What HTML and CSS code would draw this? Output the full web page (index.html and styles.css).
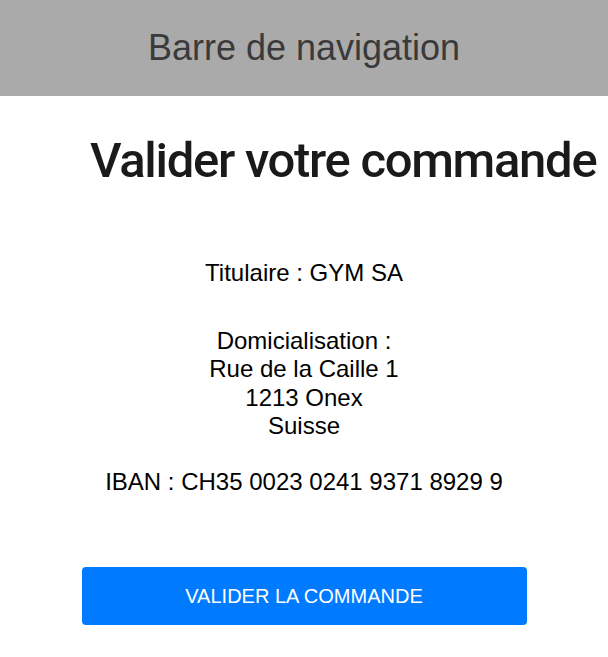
FILE: index.html
```html
<!DOCTYPE html>
<html lang="fr">
<head>
<meta charset="utf-8">
<title>Valider votre commande</title>
<link rel="stylesheet" href="styles.css">
</head>
<body>
<header class="navbar">Barre de navigation</header>
<main class="content">
  <h1 class="title">Valider votre commande</h1>
  <p class="info info-holder">Titulaire : GYM SA</p>
  <p class="info info-address">Domicialisation :<br>Rue de la Caille 1<br>1213 Onex<br>Suisse</p>
  <p class="info info-iban">IBAN : CH35 0023 0241 9371 8929 9</p>
  <button class="btn" type="button">VALIDER LA COMMANDE</button>
</main>
</body>
</html>
```
FILE: styles.css
```css
html, body {
  margin: 0;
  padding: 0;
  background: #fff;
}
body {
  font-family: "Liberation Sans", Arial, sans-serif;
  color: #000;
}
.navbar {
  height: 96px;
  background: #aaaaaa;
  color: #3a3a3a;
  font-size: 36px;
  display: flex;
  align-items: center;
  justify-content: center;
}
.content {
  display: flex;
  flex-direction: column;
  align-items: center;
}
.title {
  font-family: Roboto, sans-serif;
  font-weight: 500;
  font-size: 49px;
  line-height: 56px;
  letter-spacing: -1.3px;
  color: #1a1a1a;
  margin: 37px 0 70px 90px;
  align-self: flex-start;
  white-space: nowrap;
}
.info {
  font-size: 24px;
  line-height: 28.4px;
  text-align: center;
  margin: 0;
}
.info-address {
  margin-top: 39.5px;
}
.info-iban {
  margin-top: 27.3px;
}
.btn {
  margin-top: 71px;
  width: 445px;
  height: 58px;
  background: #007bff;
  color: #fff;
  border: none;
  border-radius: 4px;
  font-family: "Liberation Sans", Arial, sans-serif;
  font-size: 20px;
}
```
